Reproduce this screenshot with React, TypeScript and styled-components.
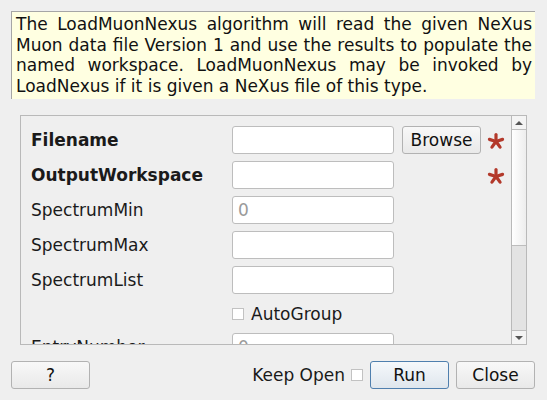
import React from 'react'
import styled, { createGlobalStyle } from 'styled-components'

const GlobalStyle = createGlobalStyle`
  html, body {
    margin: 0;
    padding: 0;
    background: #efefef;
  }
  body {
    font-family: 'DejaVu Sans', 'Liberation Sans', sans-serif;
    font-size: 17px;
    color: #1a1a1a;
  }
`

const Dialog = styled.div`
  width: 547px;
  height: 400px;
  box-sizing: border-box;
  padding: 11px 12px 0 11px;
  display: flex;
  flex-direction: column;
`

const Description = styled.div`
  height: 88px;
  box-sizing: border-box;
  background: #ffffe1;
  border-top: 1px solid #a6a6a6;
  border-left: 1px solid #a6a6a6;
  padding: 2px 3px 0 4px;
  font-size: 17px;
  line-height: 20.5px;
  text-align: justify;
  color: #111;
`

const Panel = styled.div`
  margin: 16px 8px 0 9px;
  height: 230px;
  box-sizing: border-box;
  border: 1px solid #b9b9b9;
  display: flex;
`

const Form = styled.div`
  flex: 1;
  overflow: hidden;
  padding: 10px 0 0 10px;
  display: flex;
  flex-direction: column;
  gap: 7px;
`

const Row = styled.div<{ $short?: boolean }>`
  display: flex;
  align-items: center;
  height: ${(p) => (p.$short ? 25 : 28)}px;
  flex: none;
`

const Label = styled.div<{ $bold?: boolean }>`
  width: 201px;
  font-weight: ${(p) => (p.$bold ? 'bold' : 'normal')};
  white-space: nowrap;
`

const Input = styled.div`
  width: 162px;
  height: 28px;
  box-sizing: border-box;
  background: #ffffff;
  border: 1px solid #bdbdbd;
  border-radius: 3px;
  padding: 0 5px;
  display: flex;
  align-items: center;
  color: #9a9a9a;
`

const Button = styled.div<{ $primary?: boolean }>`
  width: 79px;
  height: 28px;
  box-sizing: border-box;
  border: 1px solid ${(p) => (p.$primary ? '#4f7fae' : '#b2b2b2')};
  border-radius: 3px;
  background: ${(p) =>
    p.$primary
      ? 'linear-gradient(#f5f8fb, #dfe6ed)'
      : 'linear-gradient(#f8f8f8, #e9e9e9)'};
  display: flex;
  align-items: center;
  justify-content: center;
  color: #111;
`

const BrowseButton = styled(Button)`
  margin-left: 8px;
`

const Required = styled.div<{ $offset: number }>`
  margin-left: ${(p) => p.$offset}px;
  width: 18px;
  height: 18px;
  display: flex;
  margin-top: 2px;
`

const CheckBox = styled.div`
  width: 12px;
  height: 12px;
  box-sizing: border-box;
  border: 1px solid #c2c2c2;
  background: #ffffff;
  flex: none;
`

const CheckLabel = styled.div`
  display: flex;
  align-items: center;
  gap: 7px;
  margin-left: 201px;
`

const ScrollBar = styled.div`
  width: 14px;
  border-left: 1px solid #b9b9b9;
  display: flex;
  flex-direction: column;
`

const Arrow = styled.div<{ $down?: boolean }>`
  height: 14px;
  flex: none;
  box-sizing: border-box;
  background: #f4f4f4;
  border-${(p) => (p.$down ? 'top' : 'bottom')}: 1px solid #bdbdbd;
  display: flex;
  align-items: center;
  justify-content: center;
  &::after {
    content: '';
    border-left: 4px solid transparent;
    border-right: 4px solid transparent;
    border-${(p) => (p.$down ? 'top' : 'bottom')}: 4px solid #555;
  }
`

const Thumb = styled.div`
  height: 116px;
  flex: none;
  box-sizing: border-box;
  background: linear-gradient(90deg, #ffffff, #ededed);
  border-bottom: 1px solid #bdbdbd;
`

const Track = styled.div`
  flex: 1;
  background: #e3e3e3;
`

const Footer = styled.div`
  margin-top: 16px;
  display: flex;
  align-items: center;
  gap: 7px;
`

const Spacer = styled.div`
  flex: 1;
`

const KeepOpen = styled.div`
  display: flex;
  align-items: center;
  gap: 6px;
`

const Asterisk = () => (
  <svg width="18" height="18" viewBox="0 0 18 18">
    {[0, 72, 144, 216, 288].map((a) => (
      <rect
        key={a}
        x="7.4"
        y="1"
        width="3.2"
        height="8.5"
        rx="1.6"
        fill="#b3392b"
        transform={`rotate(${a} 9 9.5)`}
      />
    ))}
  </svg>
)

const fields = [
  { name: 'SpectrumMin', placeholder: '0' },
  { name: 'SpectrumMax' },
  { name: 'SpectrumList' },
]

export default function App() {
  return (
    <Dialog>
      <GlobalStyle />
      <Description>
        The LoadMuonNexus algorithm will read the given NeXus Muon data file Version 1 and use
        the results to populate the named workspace. LoadMuonNexus may be invoked by LoadNexus
        if it is given a NeXus file of this type.
      </Description>
      <Panel>
        <Form>
          <Row>
            <Label $bold>Filename</Label>
            <Input />
            <BrowseButton>Browse</BrowseButton>
            <Required $offset={6}>
              <Asterisk />
            </Required>
          </Row>
          <Row>
            <Label $bold>OutputWorkspace</Label>
            <Input />
            <Required $offset={93}>
              <Asterisk />
            </Required>
          </Row>
          {fields.map((f) => (
            <Row key={f.name}>
              <Label>{f.name}</Label>
              <Input>{f.placeholder}</Input>
            </Row>
          ))}
          <Row $short>
            <CheckLabel>
              <CheckBox />
              AutoGroup
            </CheckLabel>
          </Row>
          <Row>
            <Label>EntryNumber</Label>
            <Input>0</Input>
          </Row>
        </Form>
        <ScrollBar>
          <Arrow />
          <Thumb />
          <Track />
          <Arrow $down />
        </ScrollBar>
      </Panel>
      <Footer>
        <Button>?</Button>
        <Spacer />
        <KeepOpen>
          Keep Open
          <CheckBox />
        </KeepOpen>
        <Button $primary>Run</Button>
        <Button>Close</Button>
      </Footer>
    </Dialog>
  )
}
